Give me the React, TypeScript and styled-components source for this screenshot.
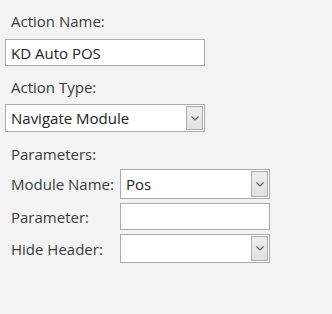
import React from "react";
import styled, { createGlobalStyle } from "styled-components";

const Global = createGlobalStyle`
  html, body { margin: 0; padding: 0; background: #f3f3f3; }
  body { font-family: "Open Sans", "Noto Sans", sans-serif; color: #3b3b3b; }
`;

const Page = styled.div`
  width: 332px;
  height: 314px;
  box-sizing: border-box;
  padding: 10px 0 0 5px;
  display: flex;
  flex-direction: column;
  font-size: 15px;
`;

const Label = styled.div<{ $mt?: number }>`
  padding-left: 6px;
  height: 22px;
  line-height: 22px;
  margin-top: ${(p) => p.$mt ?? 0}px;
`;

const Box = styled.div<{ $w: number; $h: number; $mt?: number }>`
  box-sizing: border-box;
  width: ${(p) => p.$w}px;
  height: ${(p) => p.$h}px;
  margin-top: ${(p) => p.$mt ?? 0}px;
  background: #fff;
  border: 1px solid #ababab;
  display: flex;
  align-items: center;
  padding: 0 1px 0 5px;
  color: #222;
  font-size: 15px;
`;

const Value = styled.span`
  flex: 1;
`;

const DropButton = styled.div<{ $h: number }>`
  box-sizing: border-box;
  width: 17px;
  height: ${(p) => p.$h}px;
  background: linear-gradient(#ececec, #e2e2e2);
  border: 1px solid #acacac;
  display: flex;
  align-items: center;
  justify-content: center;
`;

const Grid = styled.div`
  display: grid;
  grid-template-columns: 115px 150px;
  row-gap: 4px;
  margin-top: 4px;
  align-items: center;
`;

const RowLabel = styled.div`
  padding-left: 6px;
`;

const Chevron = () => (
  <svg width="8" height="5" viewBox="0 0 8 5">
    <path d="M0.5 0.5 L4 4 L7.5 0.5" fill="none" stroke="#606060" strokeWidth="1.2" />
  </svg>
);

const Select = ({ w, h, value, mt }: { w: number; h: number; value?: string; mt?: number }) => (
  <Box $w={w} $h={h} $mt={mt}>
    <Value>{value}</Value>
    <DropButton $h={h - 4}>
      <Chevron />
    </DropButton>
  </Box>
);

export default function App() {
  return (
    <>
      <Global />
      <Page>
        <Label>Action Name:</Label>
        <Box $w={200} $h={27} $mt={7}>
          <Value>KD Auto POS</Value>
        </Box>
        <Label $mt={10}>Action Type:</Label>
        <Select w={200} h={28} value="Navigate Module" mt={6} />
        <Label $mt={11}>Parameters:</Label>
        <Grid>
          <RowLabel>Module Name:</RowLabel>
          <Select w={150} h={30} value="Pos" />
          <RowLabel>Parameter:</RowLabel>
          <Box $w={150} $h={27} />
          <RowLabel>Hide Header:</RowLabel>
          <Select w={150} h={29} />
        </Grid>
      </Page>
    </>
  );
}
